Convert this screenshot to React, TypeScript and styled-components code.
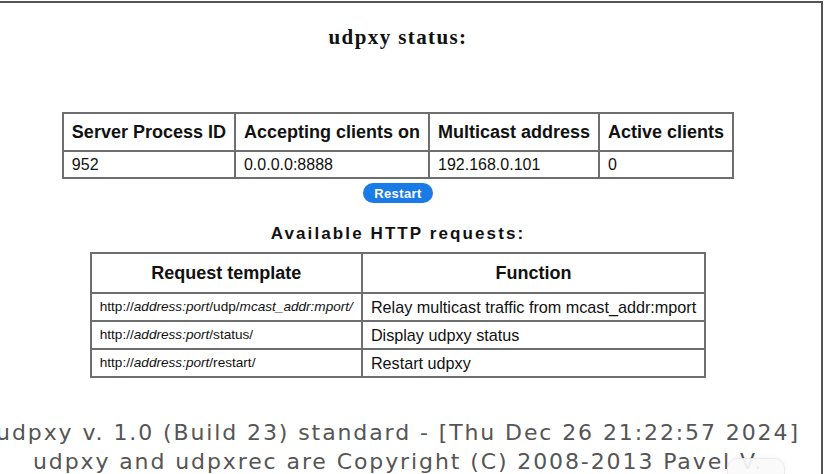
import React from "react";
import styled, { createGlobalStyle } from "styled-components";

const GlobalStyle = createGlobalStyle`
  html, body {
    margin: 0;
    padding: 0;
    background: #ffffff;
    overflow: hidden;
  }
  body {
    padding-top: 1px;
    font-family: "Liberation Sans", Arial, sans-serif;
  }
`;

const Frame = styled.div`
  position: relative;
  width: 848px;
  margin-left: -25px;
  box-sizing: border-box;
  border-top: 2px solid #555;
  border-right: 2px solid #555;
  display: flex;
  flex-direction: column;
  align-items: center;
  height: 520px;
`;

const Title = styled.h1`
  margin: 22px 0 0;
  font-family: "Liberation Serif", "Times New Roman", serif;
  font-size: 21px;
  font-weight: bold;
  letter-spacing: 1.4px;
  color: #111;
  line-height: 24px;
`;

const Grid = styled.table<{ $top: number }>`
  border-collapse: collapse;
  color: #111;
  margin-top: ${(p) => p.$top}px;
`;

const Head = styled.th<{ $align?: string; $pad?: number }>`
  border: 2px solid #6e6e6e;
  font-size: 18px;
  font-weight: bold;
  padding: ${(p) => p.$pad ?? 8}px 8px;
  line-height: 20px;
  text-align: ${(p) => p.$align || "left"};
  white-space: nowrap;
`;

const Cell = styled.td<{ $size?: number; $h?: number }>`
  border: 2px solid #6e6e6e;
  font-size: ${(p) => p.$size || 16}px;
  padding: 3px 8px;
  line-height: 18px;
  height: ${(p) => p.$h ?? 19}px;
  white-space: nowrap;
`;

const RestartButton = styled.button`
  margin-top: 4px;
  width: 70px;
  height: 20px;
  border: none;
  border-radius: 10px;
  background: #1a7ae6;
  color: #fff;
  font-family: "Liberation Sans", Arial, sans-serif;
  font-weight: bold;
  font-size: 13px;
  letter-spacing: 0.4px;
  padding: 0;
  cursor: pointer;
`;

const SubTitle = styled.h2`
  margin: 20px 0 0;
  font-size: 17px;
  font-weight: bold;
  letter-spacing: 2.1px;
  line-height: 22px;
  color: #111;
`;

const Footer = styled.div`
  margin-top: 40px;
  font-family: "DejaVu Sans", Verdana, sans-serif;
  font-size: 22px;
  letter-spacing: 1.9px;
  line-height: 29px;
  color: #555;
  text-align: center;
  white-space: nowrap;
`;

const FloatingPill = styled.div`
  position: fixed;
  left: 727px;
  top: 458px;
  width: 56px;
  height: 30px;
  border-radius: 10px;
  background: rgba(250, 250, 250, 0.92);
  border: 1px solid rgba(0, 0, 0, 0.06);
  box-shadow: 0 0 6px rgba(0, 0, 0, 0.05);
`;

const Var = styled.i``;

const statusColumns = [
  "Server Process ID",
  "Accepting clients on",
  "Multicast address",
  "Active clients",
];
const statusValues = ["952", "0.0.0.0:8888", "192.168.0.101", "0"];

const requests: { path: React.ReactNode; fn: string }[] = [
  {
    path: (
      <>
        http://<Var>address:port</Var>/udp/<Var>mcast_addr:mport/</Var>
      </>
    ),
    fn: "Relay multicast traffic from mcast_addr:mport",
  },
  {
    path: (
      <>
        http://<Var>address:port</Var>/status/
      </>
    ),
    fn: "Display udpxy status",
  },
  {
    path: (
      <>
        http://<Var>address:port</Var>/restart/
      </>
    ),
    fn: "Restart udpxy",
  },
];

export default function App() {
  return (
    <>
      <GlobalStyle />
      <Frame>
        <Title>udpxy status:</Title>
        <Grid $top={63}>
          <tbody>
            <tr>
              {statusColumns.map((c) => (
                <Head key={c}>{c}</Head>
              ))}
            </tr>
            <tr>
              {statusValues.map((v, i) => (
                <Cell key={i}>{v}</Cell>
              ))}
            </tr>
          </tbody>
        </Grid>
        <RestartButton>Restart</RestartButton>
        <SubTitle>Available HTTP requests:</SubTitle>
        <Grid $top={7}>
          <tbody>
            <tr>
              <Head $align="center" $pad={9}>
                Request template
              </Head>
              <Head $align="center" $pad={9}>
                Function
              </Head>
            </tr>
            {requests.map((r) => (
              <tr key={r.fn}>
                <Cell $size={13.6} $h={20}>
                  {r.path}
                </Cell>
                <Cell $size={16.2} $h={20}>
                  {r.fn}
                </Cell>
              </tr>
            ))}
          </tbody>
        </Grid>
        <Footer>
          udpxy v. 1.0 (Build 23) standard - [Thu Dec 26 21:22:57 2024]
          <br />
          udpxy and udpxrec are Copyright (C) 2008-2013 Pavel V.
        </Footer>
      </Frame>
      <FloatingPill />
    </>
  );
}
